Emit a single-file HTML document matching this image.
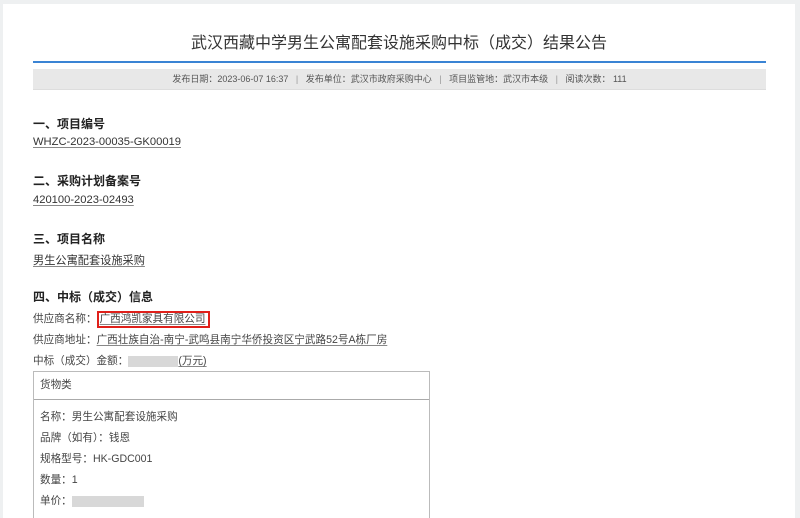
<!DOCTYPE html>
<html><head><meta charset="utf-8">
<style>
*{margin:0;padding:0;box-sizing:border-box}
html,body{width:800px;height:518px;overflow:hidden}
body{background:#eef0f1;font-family:"Liberation Sans","Noto Sans CJK SC",sans-serif;color:#333;position:relative}
.page{position:absolute;left:3px;top:4px;width:792px;height:514px;background:#fff;overflow:hidden}
.title{position:absolute;left:0;width:792px;top:25px;text-align:center;font-size:16px;color:#333}
.blue{position:absolute;left:30px;top:57px;width:733px;height:2px;background:#3a84d4}
.meta{position:absolute;left:30px;top:65px;width:733px;height:21px;background:#e8e8e8;font-size:9px;color:#555;text-align:center;line-height:21px;border-bottom:1px solid #ddd}
.meta span{margin:0 5px;color:#999}
.h{position:absolute;left:30px;font-size:12px;font-weight:bold;color:#222}
.l{position:absolute;left:30px;font-size:11.2px;color:#333;text-decoration:underline;text-decoration-color:#888;text-underline-offset:2px;white-space:nowrap}
.t{position:absolute;left:30px;font-size:10.6px;color:#444;white-space:nowrap}
.t u{text-decoration-color:#888;text-underline-offset:2px}
.red{border:2px solid #e0201a;padding:0 2px 1px 1px}
.blur{display:inline-block;background:#d8d8d8;height:11px;vertical-align:middle}
.box{position:absolute;left:30px;top:367px;width:397px;height:160px;border:1px solid #bbb}
.bh{height:28px;border-bottom:1px solid #aaa;font-size:10.6px;line-height:27px;padding-left:6px;color:#444}
.r{position:absolute;left:6px;font-size:10.6px;color:#444;white-space:nowrap}
</style></head><body>
<div class="page">
<div class="title">武汉西藏中学男生公寓配套设施采购中标（成交）结果公告</div>
<div class="blue"></div>
<div class="meta">发布日期：2023-06-07 16:37 <span>|</span> 发布单位：武汉市政府采购中心 <span>|</span> 项目监管地：武汉市本级 <span>|</span> 阅读次数： 111</div>
<div class="h" style="top:111px">一、项目编号</div>
<div class="l" style="top:132px">WHZC-2023-00035-GK00019</div>
<div class="h" style="top:168px">二、采购计划备案号</div>
<div class="l" style="top:190px">420100-2023-02493</div>
<div class="h" style="top:226px">三、项目名称</div>
<div class="l" style="top:248px">男生公寓配套设施采购</div>
<div class="h" style="top:284px">四、中标（成交）信息</div>
<div class="t" style="top:307px">供应商名称：<span class="red"><u>广西鸿凯家具有限公司</u></span></div>
<div class="t" style="top:328px">供应商地址：<u>广西壮族自治-南宁-武鸣县南宁华侨投资区宁武路52号A栋厂房</u></div>
<div class="t" style="top:349px">中标（成交）金额：<span class="blur" style="width:50px"></span><u>(万元)</u></div>
<div class="box">
<div class="bh">货物类</div>
<div class="r" style="top:37px">名称：男生公寓配套设施采购</div>
<div class="r" style="top:58px">品牌（如有）：钱恩</div>
<div class="r" style="top:79px">规格型号：HK-GDC001</div>
<div class="r" style="top:100px">数量：1</div>
<div class="r" style="top:121px">单价：<span class="blur" style="width:72px"></span></div>
</div>
</div>
</body></html>
